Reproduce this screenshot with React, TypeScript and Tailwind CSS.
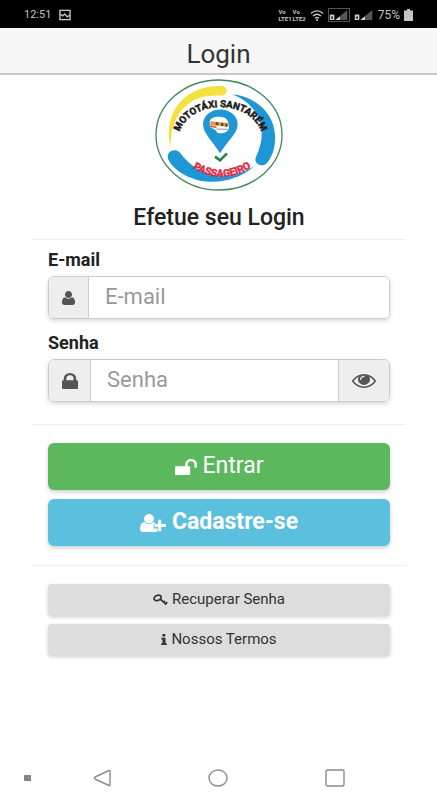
import React from 'react';

type IconProps = { className?: string };

const UserIcon: React.FC<IconProps> = ({ className }) => (
  <svg viewBox="0 256 1408 1536" preserveAspectRatio="none" fill="currentColor" aria-hidden="true" className={className}>
    <path d="M1408 1533q0 120-73 189.5t-194 69.5h-874q-121 0-194-69.5t-73-189.5q0-53 3.5-103.5t14-109 26.5-108.5 43-97.5 62-81 85.5-53.5 111.5-20q9 0 42 21.5t74.5 48 108 48 133.5 21.5 133.5-21.5 108-48 74.5-48 42-21.5q61 0 111.5 20t85.5 53.5 62 81 43 97.5 26.5 108.5 14 109 3.5 103.5zm-320-893q0 159-112.5 271.5t-271.5 112.5-271.5-112.5-112.5-271.5 112.5-271.5 271.5-112.5 271.5 112.5 112.5 271.5z" />
  </svg>
);

const LockIcon: React.FC<IconProps> = ({ className }) => (
  <svg viewBox="320 128 1152 1408" preserveAspectRatio="none" fill="currentColor" aria-hidden="true" className={className}>
    <path d="M640 768h512v-192q0-106-75-181t-181-75-181 75-75 181v192zm832 96v576q0 40-28 68t-68 28h-960q-40 0-68-28t-28-68v-576q0-40 28-68t68-28h32v-192q0-184 132-316t316-132 316 132 132 316v192h32q40 0 68 28t28 68z" />
  </svg>
);

const UnlockIcon: React.FC<IconProps> = ({ className }) => (
  <svg viewBox="64 128 1664 1408" preserveAspectRatio="none" fill="currentColor" aria-hidden="true" className={className}>
    <path d="M1728 576v256q0 26-19 45t-45 19h-64q-26 0-45-19t-19-45v-256q0-106-75-181t-181-75-181 75-75 181v192h96q40 0 68 28t28 68v576q0 40-28 68t-68 28h-960q-40 0-68-28t-28-68v-576q0-40 28-68t68-28h672v-192q0-185 131.5-316.5t316.5-131.5 316.5 131.5 131.5 316.5z" />
  </svg>
);

const EyeIcon: React.FC<IconProps> = ({ className }) => (
  <svg viewBox="0 384 1792 1152" preserveAspectRatio="none" fill="currentColor" aria-hidden="true" className={className}>
    <path d="M1664 960q-152-236-381-353 61 104 61 225 0 185-131.5 316.5t-316.5 131.5-316.5-131.5-131.5-316.5q0-121 61-225-229 117-381 353 133 205 333.5 326.5t434.5 121.5 434.5-121.5 333.5-326.5zm-720-384q0-20-14-34t-34-14q-125 0-214.5 89.5t-89.5 214.5q0 20 14 34t34 14 34-14 14-34q0-86 61-147t147-61q20 0 34-14t14-34zm848 384q0 34-20 69-140 230-376.5 368.5t-499.5 138.5-499.5-139-376.5-368q-20-35-20-69t20-69q140-229 376.5-368t499.5-139 499.5 139 376.5 368q20 35 20 69z" />
  </svg>
);

const UserPlusIcon: React.FC<IconProps> = ({ className }) => (
  <svg viewBox="0 0 26 18" fill="currentColor" aria-hidden="true" className={className}>
    <ellipse cx="9" cy="4.8" rx="5" ry="4.7" />
    <path d="M4.500 8C1.500 8.400 0 11.500 0 15c0 1.900 1.300 3 3.200 3h12c1 0 1.900-.4 2.300-1v-2.600h-3.900V9.900h2.300l-1.400-1.500L13.200 8C12 9.400 10.700 10.200 9 10.200S6 9.400 4.500 8z" />
    <path d="M18.200 5.800h3v4.200h4.600v3h-4.600v4.300h-3v-4.300h-3.800v-3h3.800z" />
  </svg>
);

const KeyIcon: React.FC<IconProps> = ({ className }) => (
  <svg viewBox="0 0 15 12" fill="none" stroke="currentColor" aria-hidden="true" className={className}>
    <ellipse cx="4.600" cy="3.900" rx="3.700" ry="2.500" strokeWidth="1.700" transform="rotate(-22 4.600 3.900)" />
    <path d="M7.200 5.200l6.100 5.200M10.200 8.800l1.600-1.900M12 10.600l2.200-2.500" strokeWidth="1.700" />
  </svg>
);

const InfoIcon: React.FC<IconProps> = ({ className }) => (
  <svg viewBox="0 0 6 11" fill="currentColor" aria-hidden="true" className={className}>
    <path d="M1.400 0h2.900v2.400H1.400zM.3 3.700h4.200v5.500h1.300V11H.2V9.200h1.300V5.500H.3z" />
  </svg>
);

const Logo: React.FC<IconProps> = ({ className }) => (
  <svg viewBox="30 18 384 336" role="img" aria-label="Mototáxi Santarém Passageiro" className={className}>
    <defs>
      <path id="arc-top" d="M104 176A126 98 0 0 1 348 176" />
      <path id="arc-bottom" d="M132 278Q230 346 330 276" />
    </defs>
    <ellipse cx="222" cy="186" rx="189" ry="165" fill="#fff" stroke="#3f8860" strokeWidth="4" />
    <path d="M77 224C56 140 96 40 228 38c22 2 24 27 2 30-24-2-48 0-70 8C102 100 76 152 77 224z" fill="#f3e13c" />
    <path d="M262 64c72 8 124 56 128 122 2 32-6 62-24 84-14 15-40 4-34-16 44-92 4-160-70-190z" fill="#1f97d4" />
    <path d="M70 260c-8-24 16-36 34-22 46 66 130 96 224 42-52 46-122 54-174 40-40-12-70-34-84-60z" fill="#1f97d4" />
    <path d="M225 241c-20-35-51-58-51-88a51 43 0 0 1 104 0c0 30-33 53-53 88z" fill="#1f97d4" />
    <path d="M194 146c2-12 18-16 34-14 16 0 24 12 24 32-3 15-20 19-34 16l-8-10-15-8z" fill="#fff" />
    <path d="M196 145l54 5v11l-54-4z" fill="#e79a3c" />
    <path d="M212 148h8v8h-8zM228 150h7v9h-7zM241 152h6v9h-6z" fill="#4c5145" />
    <path d="M196 157l20 4-3 4-17-3z" fill="#d9503c" />
    <path d="M214 168l34 1" stroke="#8d9699" strokeWidth="3" />
    <path d="M210 251l15 11 21-21" fill="none" stroke="#258343" strokeWidth="8" />
    <text fill="#1c1c1c" stroke="#1c1c1c" strokeWidth="1.500" fontSize="29" className="font-['Roboto',sans-serif] font-bold">
      <textPath href="#arc-top" startOffset="50%" textAnchor="middle">MOTOTÁXI SANTARÉM</textPath>
    </text>
    <text fill="#e02c46" stroke="#e02c46" strokeWidth="1.500" fontSize="31" className="font-['Roboto',sans-serif] font-bold">
      <textPath href="#arc-bottom" startOffset="50%" textAnchor="middle">PASSAGEIRO</textPath>
    </text>
  </svg>
);

const SignalIcon: React.FC<IconProps> = ({ className }) => (
  <svg viewBox="0 0 20 13" aria-hidden="true" className={className}>
    <path d="M19 1v11H6z" fill="#555" />
    <path d="M11 8v4H6z" fill="#ddd" />
    <rect x="0" y="6" width="5" height="6" rx="1" fill="#ccc" />
    <path d="M1.500 8h2v2.500h-2z" fill="#222" />
  </svg>
);

const StatusBar: React.FC = () => (
  <div className="flex h-7 items-center justify-between bg-black px-6 pt-0.5 text-[#c4c4c4]">
    <div className="flex items-center gap-2">
      <span className="text-[11px]">12:51</span>
      <svg viewBox="0 0 13 12" fill="none" stroke="currentColor" className="h-3 w-3" aria-hidden="true">
        <rect x="1" y="1" width="11" height="10" strokeWidth="1.500" />
        <path d="M1 5l3 2 2-2 3 3 3-2" strokeWidth="1.500" />
      </svg>
    </div>
    <div className="flex items-center gap-1">
      <div className="grid grid-cols-2 gap-x-px text-[6px] leading-[7px] font-bold">
        <span>Vo</span>
        <span>Vo</span>
        <span>LTE1</span>
        <span>LTE2</span>
      </div>
      <svg viewBox="0 0 14 12" fill="none" stroke="currentColor" className="h-3 w-3.5" aria-hidden="true">
        <path d="M1 4.500c3.500-3.500 8.500-3.500 12 0M3 7c2.500-2.300 5.500-2.300 8 0M5 9.300c1.300-1 2.700-1 4 0" strokeWidth="1.400" />
        <circle cx="7" cy="11" r="1" fill="currentColor" stroke="none" />
      </svg>
      <div className="border border-[#555]">
        <SignalIcon className="h-3 w-5" />
      </div>
      <SignalIcon className="h-3 w-5" />
      <span className="text-xs">75%</span>
      <svg viewBox="0 0 9 12" fill="currentColor" className="h-3 w-[9px]" aria-hidden="true">
        <path d="M3 0h3v1.500h3V12H0V1.500h3z" />
      </svg>
    </div>
  </div>
);

const Divider: React.FC = () => <hr className="-mx-4 border-[#f0f0f0]" />;

const NavBar: React.FC = () => (
  <nav className="mt-auto grid h-11 grid-cols-[44px_1fr_1fr_1fr_44px] items-center text-[#8c8c8c]">
    <span className="ml-6 h-1.5 w-[7px] bg-[#858585]" />
    <button type="button" aria-label="Voltar" className="flex justify-center">
      <svg viewBox="0 0 18 18" fill="none" stroke="currentColor" strokeWidth="1.400" strokeLinejoin="round" className="size-[18px]">
        <path d="M16 1.500L2 8q-1.500 1 0 2l14 6.500q1 .3 1-.8V2.300q0-1.100-1-.8z" />
      </svg>
    </button>
    <button type="button" aria-label="Início" className="flex justify-center">
      <svg viewBox="0 0 20 18" fill="none" stroke="currentColor" strokeWidth="1.400" className="h-[18px] w-5">
        <ellipse cx="10" cy="9" rx="9" ry="8" />
      </svg>
    </button>
    <button type="button" aria-label="Recentes" className="flex justify-center">
      <svg viewBox="0 0 20 18" fill="none" stroke="currentColor" strokeWidth="1.400" className="h-[18px] w-5">
        <rect x="1" y="1" width="18" height="16" rx="1.500" />
      </svg>
    </button>
  </nav>
);

const groupClass = 'flex h-[43px] overflow-hidden rounded-md border border-[#cccccc] shadow-[0_2px_4px_rgba(0,0,0,0.16)]';
const inputClass = 'min-w-0 flex-1 bg-white px-4 pb-0.5 text-[22px] text-[#555555] outline-none placeholder:text-[#999999]';
const buttonClass = 'flex h-[47px] w-full items-center justify-center rounded-md text-[23px] text-white shadow-[0_2px_4px_rgba(0,0,0,0.2)]';
const linkClass = 'flex h-[31px] w-full items-center justify-center rounded-sm bg-[#dddddd] text-[15px] text-[#333333] shadow-[0_2px_4px_rgba(0,0,0,0.2)]';

export default function App() {
  return (
    <div className="flex min-h-screen flex-col bg-white font-['Roboto',sans-serif] text-[#222222]">
      <StatusBar />
      <header className="flex h-[47px] items-center justify-center border-b-2 border-[#c8c8c8] bg-[#f7f7f7] pt-2">
        <h1 className="text-[26px] text-[#333333]">Login</h1>
      </header>

      <main className="pl-12 pr-[47px] pt-1">
        <Logo className="mx-auto h-28 w-32" />
        <h2 className="mt-[13px] mb-[7px] text-center text-[23px] leading-7 font-medium">Efetue seu Login</h2>
        <Divider />

        <form onSubmit={(e) => e.preventDefault()}>
          <label htmlFor="email" className="mt-2 mb-1 block text-[18px] leading-6 font-bold">
            E-mail
          </label>
          <div className={groupClass}>
            <span className="flex w-10 items-center justify-center border-r border-[#cccccc] bg-[#eeeeee] text-[#555555]">
              <UserIcon className="h-3.5 w-[13px]" />
            </span>
            <input id="email" type="email" placeholder="E-mail" className={inputClass} />
          </div>

          <label htmlFor="senha" className="mt-3 mb-1 block text-[18px] leading-6 font-bold">
            Senha
          </label>
          <div className={groupClass}>
            <span className="flex w-[42px] items-center justify-center border-r border-[#cccccc] bg-[#eeeeee] text-[#555555]">
              <LockIcon className="h-4 w-4" />
            </span>
            <input id="senha" type="password" placeholder="Senha" className={inputClass} />
            <button
              type="button"
              aria-label="Mostrar senha"
              className="flex w-[51px] items-center justify-center border-l border-[#cccccc] bg-[#eeeeee] text-[#555555]"
            >
              <EyeIcon className="h-3.5 w-6" />
            </button>
          </div>

          <div className="mt-[22px] mb-[18px]">
            <Divider />
          </div>

          <button type="submit" className={`${buttonClass} mb-[9px] gap-1.5 bg-[#5cb85c]`}>
            <UnlockIcon className="h-4 w-[22px]" />
            Entrar
          </button>
          <button type="button" className={`${buttonClass} gap-1.5 bg-[#5bc0de] font-bold`}>
            <UserPlusIcon className="h-[18px] w-[26px]" />
            Cadastre-se
          </button>
        </form>

        <div className="mt-[19px] mb-[18px]">
          <Divider />
        </div>

        <a href="#recuperar" className={`${linkClass} mb-[9px] gap-1`}>
          <KeyIcon className="h-3 w-[15px]" />
          Recuperar Senha
        </a>
        <a href="#termos" className={`${linkClass} gap-1`}>
          <InfoIcon className="h-[11px] w-1.5" />
          Nossos Termos
        </a>
      </main>

      <NavBar />
    </div>
  );
}
